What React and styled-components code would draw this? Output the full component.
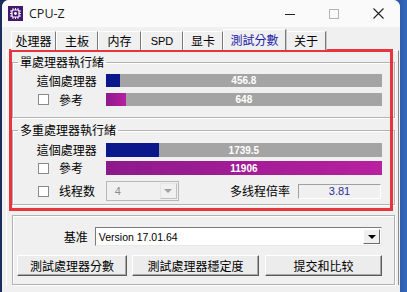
import styled, { createGlobalStyle } from "styled-components"

const GlobalStyle = createGlobalStyle`
    html, body {
        margin: 0;
        padding: 0;
        background: #21478c;
    }
    * {
        box-sizing: border-box;
    }
`

const CJK = `"Noto Sans CJK TC", "Noto Sans CJK SC", sans-serif`
const LATIN = `"Liberation Sans", Arial, sans-serif`

const Desktop = styled.div`
    width: 407px;
    height: 292px;
    overflow: hidden;
    display: flex;
    background: linear-gradient(to right, #1a2d5c 0, #1a2d5c 2px, #2c5cae 400px, #3468bd 407px);
`

const Window = styled.div`
    position: relative;
    margin-left: 2px;
    width: 398px;
    height: 300px;
    background: #f0f0f0;
    border-radius: 7px 7px 0 0;
    overflow: hidden;
    font-family: ${CJK};
    font-size: 12px;
    color: #000;
`

const TitleBar = styled.div`
    height: 27px;
    background: #fafafa;
    display: flex;
    align-items: center;
    padding-left: 6px;
`

const AppName = styled.span`
    margin-left: 6px;
    font-family: "Open Sans", "Noto Sans", sans-serif;
    font-size: 12.5px;
    color: #1a1a1a;
`

const Controls = styled.div`
    margin-left: auto;
    display: flex;
    height: 100%;
`

const Ctrl = styled.div`
    width: 44px;
    display: flex;
    align-items: center;
    justify-content: center;
`

const Tabs = styled.div`
    display: flex;
    margin: 4px 0 0 9px;
    height: 19px;
`

const Tab = styled.div`
    width: ${p => p.w}px;
    height: ${p => p.active ? 21 : 19}px;
    margin-top: ${p => p.active ? -2 : 0}px;
    display: flex;
    align-items: center;
    justify-content: center;
    border-top: 1px solid #fff;
    border-left: 1px solid #fff;
    border-right: 1px solid #7a7a7a;
    box-shadow: 1px 0 0 #c8c8c8;
    color: ${p => p.active ? "#1d1da8" : "#000"};
    font-family: ${p => p.latin ? LATIN : CJK};
    font-size: ${p => p.latin ? "11px" : "12px"};
    line-height: 14px;
    background: #f0f0f0;
    position: relative;
    z-index: ${p => p.active ? 2 : 1};
`

const Panel = styled.div`
    margin-left: 4px;
    width: 393px;
    border-left: 1px solid #fff;
    border-top: 1px solid #fff;
    border-right: 1px solid #8a8a8a;
    padding: 4px 3px 0 5px;
`

const Group = styled.fieldset`
    margin: ${p => p.mt || 0}px 0 0 0;
    padding: ${p => p.pt}px 12px ${p => p.pb}px 0;
    border: 1px solid #b2b2b2;
    box-shadow: inset 1px 1px 0 #fff, 1px 1px 0 #fff;
    min-width: 0;
`

const Legend = styled.legend`
    margin-left: 5px;
    padding: 0 2px;
    font-size: 12px;
    line-height: 14px;
    height: 14px;
`

const Rows = styled.div`
    display: flex;
    flex-direction: column;
    gap: ${p => p.gap}px;
`

const Row = styled.div`
    display: flex;
    align-items: center;
    height: ${p => p.h}px;
`

const LabelCell = styled.div`
    width: 84px;
    margin-right: 9px;
    display: flex;
    align-items: center;
    justify-content: ${p => p.right ? "flex-end" : "flex-start"};
    padding-left: ${p => p.right ? 0 : 25}px;
    line-height: 14px;
    white-space: nowrap;
`

const Check = styled.span`
    width: 11px;
    height: 11px;
    background: #fff;
    border: 1px solid #8a8a8a;
    margin-right: 10px;
    flex: none;
`

const Bar = styled.div`
    position: relative;
    width: 277px;
    height: 100%;
    background: #a4a4a4;
    display: flex;
`

const Fill = styled.div`
    height: 100%;
    background: ${p => p.kind === "ref"
        ? "linear-gradient(to right, #8c1a8c, #b8209f)"
        : "#0b188c"};
`

const BarValue = styled.span`
    position: absolute;
    inset: 0;
    display: flex;
    align-items: center;
    justify-content: center;
    color: #fff;
    font-family: ${LATIN};
    font-weight: 700;
    font-size: 10px;
`

const ThreadsCell = styled.div`
    width: 277px;
    height: 100%;
    display: flex;
    align-items: center;
`

const Combo = styled.div`
    width: ${p => p.w}px;
    height: 100%;
    display: flex;
    align-items: stretch;
    background: ${p => p.disabled ? "#f0f0f0" : "#fff"};
    border: 1px solid ${p => p.disabled ? "#b8b8b8" : "#7a7a7a"};
    border-right-color: ${p => p.disabled ? "#b8b8b8" : "#e8e8e8"};
    border-bottom-color: ${p => p.disabled ? "#b8b8b8" : "#e8e8e8"};
`

const ComboText = styled.span`
    flex: 1;
    display: flex;
    align-items: center;
    padding-left: ${p => p.pl}px;
    font-family: ${LATIN};
    font-size: ${p => p.fs}px;
    color: ${p => p.disabled ? "#8c8c8c" : "#000"};
`

const ArrowBtn = styled.span`
    width: 17px;
    margin: 1px;
    background: #f0f0f0;
    border: 1px solid;
    border-color: ${p => p.disabled ? "#e4e4e4 #c0c0c0 #c0c0c0 #e4e4e4" : "#fff #6a6a6a #6a6a6a #fff"};
    display: flex;
    align-items: center;
    justify-content: center;
`

const Tri = styled.span`
    width: 0;
    height: 0;
    border-left: 4px solid transparent;
    border-right: 4px solid transparent;
    border-top: 4px solid ${p => p.disabled ? "#a0a0a0" : "#000"};
`

const RatioLabel = styled.span`
    margin-left: auto;
    margin-right: 8px;
    line-height: 14px;
`

const RatioField = styled.div`
    width: 83px;
    height: 15px;
    margin-right: 1px;
    border: 1px solid;
    border-color: #a0a0a0 #fff #fff #a0a0a0;
    display: flex;
    align-items: center;
    justify-content: center;
    font-family: ${LATIN};
    font-size: 11px;
    color: #2b2b94;
`

const BenchLabel = styled.div`
    width: 75px;
    margin-right: 7px;
    text-align: right;
    line-height: 14px;
`

const Buttons = styled.div`
    display: flex;
    padding-left: 4px;
    gap: 5px;
    height: 21px;
`

const Button = styled.button`
    width: ${p => p.w}px;
    height: 21px;
    margin-left: ${p => p.ml || 0}px;
    padding: 0;
    background: #ececec;
    border: 1px solid;
    border-color: #fff #5a5a5a #5a5a5a #fff;
    box-shadow: inset -1px -1px 0 #a8a8a8;
    font-family: ${CJK};
    font-size: 12px;
    line-height: 14px;
    color: #000;
`

const Highlight = styled.div`
    position: absolute;
    left: 7px;
    top: 49px;
    width: 384px;
    height: 162px;
    border: 3px solid #e4363c;
    pointer-events: none;
`

const ChipIcon = () => (
    <svg width="15" height="15" viewBox="0 0 15 15">
        <rect width="15" height="15" fill="#43196f" />
        <rect x="4" y="4" width="7" height="7" rx="1" fill="none" stroke="#fff" strokeWidth="1.2" />
        <circle cx="7.5" cy="7.5" r="1.4" fill="#fff" />
        {[5, 7.5, 10].map(v => (
            <g key={v} stroke="#fff" strokeWidth="0.9">
                <line x1={v} y1="2" x2={v} y2="4" />
                <line x1={v} y1="11" x2={v} y2="13" />
                <line x1="2" y1={v} x2="4" y2={v} />
                <line x1="11" y1={v} x2="13" y2={v} />
            </g>
        ))}
    </svg>
)

const tabs = [
    { label: "处理器", w: 45 },
    { label: "主板", w: 42 },
    { label: "内存", w: 43 },
    { label: "SPD", w: 42, latin: true },
    { label: "显卡", w: 40 },
    { label: "測試分數", w: 63, active: true },
    { label: "关于", w: 40 },
]

const ScoreBar = ({ value, pct, kind }) => (
    <Bar>
        <Fill kind={kind} style={{ width: `${pct}%` }} />
        <BarValue>{value}</BarValue>
    </Bar>
)

const App = () => {
    return (
        <Desktop>
            <GlobalStyle />
            <Window>
                <TitleBar>
                    <ChipIcon />
                    <AppName>CPU-Z</AppName>
                    <Controls>
                        <Ctrl>
                            <svg width="10" height="10"><line x1="0" y1="5.5" x2="10" y2="5.5" stroke="#222" strokeWidth="1" /></svg>
                        </Ctrl>
                        <Ctrl>
                            <svg width="10" height="10"><rect x="0.5" y="0.5" width="9" height="9" fill="none" stroke="#b4b4b4" strokeWidth="1" /></svg>
                        </Ctrl>
                        <Ctrl>
                            <svg width="11" height="11"><path d="M0.5 0.5 L10.5 10.5 M10.5 0.5 L0.5 10.5" stroke="#222" strokeWidth="1.1" /></svg>
                        </Ctrl>
                    </Controls>
                </TitleBar>

                <Tabs>
                    {tabs.map(t => (
                        <Tab key={t.label} w={t.w} active={t.active} latin={t.latin}>{t.label}</Tab>
                    ))}
                </Tabs>

                <Panel>
                    <Group pt={5} pb={11}>
                        <Legend>單處理器執行緒</Legend>
                        <Rows gap={6}>
                            <Row h={13}>
                                <LabelCell right>這個處理器</LabelCell>
                                <ScoreBar value="456.8" pct={5.2} />
                            </Row>
                            <Row h={13}>
                                <LabelCell><Check />參考</LabelCell>
                                <ScoreBar value="648" pct={7.3} kind="ref" />
                            </Row>
                        </Rows>
                    </Group>

                    <Group mt={5} pt={6} pb={3}>
                        <Legend>多重處理器執行緒</Legend>
                        <Rows gap={4}>
                            <Row h={14}>
                                <LabelCell right>這個處理器</LabelCell>
                                <ScoreBar value="1739.5" pct={19.4} />
                            </Row>
                            <Row h={14}>
                                <LabelCell><Check />參考</LabelCell>
                                <ScoreBar value="11906" pct={100} kind="ref" />
                            </Row>
                            <Row h={20} style={{ marginTop: 2 }}>
                                <LabelCell><Check />线程数</LabelCell>
                                <ThreadsCell>
                                    <Combo w={73} disabled>
                                        <ComboText pl={8} fs={11} disabled>4</ComboText>
                                        <ArrowBtn disabled><Tri disabled /></ArrowBtn>
                                    </Combo>
                                    <RatioLabel>多线程倍率</RatioLabel>
                                    <RatioField>3.81</RatioField>
                                </ThreadsCell>
                            </Row>
                        </Rows>
                    </Group>

                    <Group mt={10} pt={11} pb={8}>
                        <Rows gap={9}>
                            <Row h={19}>
                                <BenchLabel>基准</BenchLabel>
                                <Combo w={288}>
                                    <ComboText pl={3} fs={10.5}>Version 17.01.64</ComboText>
                                    <ArrowBtn><Tri /></ArrowBtn>
                                </Combo>
                            </Row>
                            <Buttons>
                                <Button w={111}>測試處理器分數</Button>
                                <Button w={128}>測試處理器穩定度</Button>
                                <Button w={118} ml={1}>提交和比较</Button>
                            </Buttons>
                        </Rows>
                    </Group>
                </Panel>

                <Highlight />
            </Window>
        </Desktop>
    )
}

export default App
